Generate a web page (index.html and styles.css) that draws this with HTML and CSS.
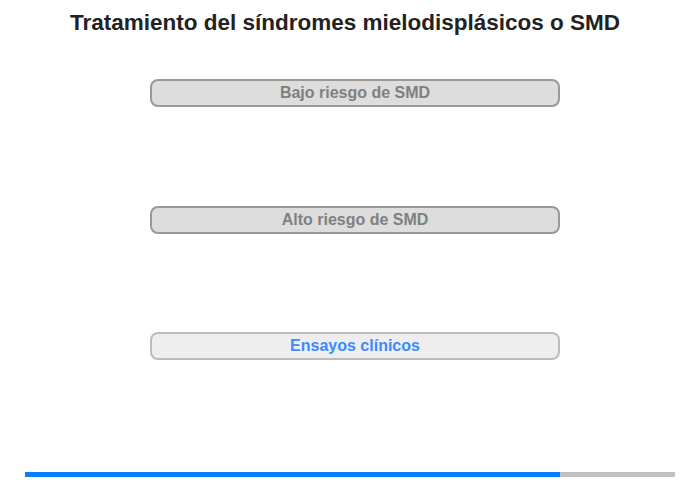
FILE: index.html
```html
<!DOCTYPE html>
<html lang="es">
<head>
    <meta charset="UTF-8">
    <meta name="viewport" content="width=device-width, initial-scale=1.0">
    <title>Tratamiento del síndromes mielodisplásicos o SMD</title>
    <link rel="stylesheet" href="styles.css">
</head>
<body>

<h1 class="page-title">Tratamiento del síndromes mielodisplásicos o SMD</h1>

<!-- opciones de tratamiento -->
<div class="choices">
    <div class="choice">Bajo riesgo de SMD</div>
    <div class="choice">Alto riesgo de SMD</div>
    <div class="choice choice-link">Ensayos clínicos</div>
</div>

<!-- barra de progreso -->
<div class="progress">
    <div class="progress-fill" style="width: 82.3%"></div>
</div>

</body>
</html>
```

FILE: styles.css
```css
body {
    margin: 0;
    font-family: "Liberation Sans", Arial, sans-serif;
    background: #fff;
}

/* titulo principal */
.page-title {
    margin: 0;
    padding: 11px 10px 0 0;
    font-size: 22.5px;
    line-height: 24px;
    font-weight: bold;
    color: #222;
    text-align: center;
}

/* botones de opciones */
.choices {
    display: flex;
    flex-direction: column;
    gap: 98.5px;
    width: 410px;
    margin: 44px 0 0 150px;
}

.choice {
    box-sizing: border-box;
    height: 28px;
    border: 2px solid #999;
    border-radius: 8px;
    background: #ddd;
    color: #808080;
    font-size: 16px;
    font-weight: bold;
    line-height: 24px;
    text-align: center;
}

.choice-link {
    border-color: #bbb;
    background: #eee;
    color: #3a8bff;
}

/* progreso */
.progress {
    width: 650px;
    height: 5px;
    margin: 112px 0 0 25px;
    background: #c0c0c0;
}

.progress-fill {
    height: 100%;
    background: #0a7cff;
}
```
